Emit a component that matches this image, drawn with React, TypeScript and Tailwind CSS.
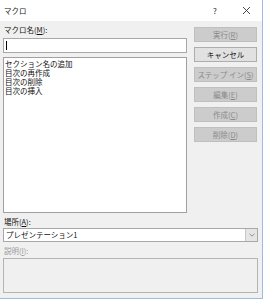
import React from "react";

const font = { fontFamily: '"Noto Sans CJK JP", "Noto Sans", sans-serif' };

function U({ children }: { children: React.ReactNode }) {
  return <span className="underline underline-offset-1">{children}</span>;
}

function Btn({ children, enabled = false }: { children: React.ReactNode; enabled?: boolean }) {
  return (
    <div
      className={
        "h-[15px] w-[63px] flex items-center justify-center text-[7.5px] leading-none border " +
        (enabled
          ? "bg-[#e1e1e1] border-[#adadad] text-[#111]"
          : "bg-[#cccccc] border-[#bfbfbf] text-[#8a8a8a]")
      }
    >
      {children}
    </div>
  );
}

export default function App() {
  return (
    <div className="w-[265px] h-[300px] bg-white" style={font}>
      <div className="w-[263px] h-[299px] border-r border-b border-[#9cbde0] flex flex-col">
        <div className="h-[21px] bg-white flex items-center pl-[4px] text-[7.5px] text-[#222]">
          <span className="flex-1">マクロ</span>
          <span className="w-[10px] text-center text-[8px] mr-[22px]">?</span>
          <svg width="9" height="9" viewBox="0 0 9 9" className="mr-[11px]">
            <path d="M1 1L8 8M8 1L1 8" stroke="#333" strokeWidth="0.9" />
          </svg>
        </div>
        <div className="flex-1 bg-[#f0f0f0] flex flex-col pl-[3px] pr-[4px]">
          <div className="flex gap-[7px]">
            <div className="w-[184px] flex flex-col">
              <div className="h-[17px] flex items-center pl-[1px] pt-[1px] text-[7.5px] text-[#111]">
                マクロ名(<U>M</U>):
              </div>
              <div className="h-[15px] bg-white border border-[#a8a8a8] flex items-center pl-[2px]">
                <div className="w-[1px] h-[9px] bg-black" />
              </div>
              <div className="mt-[4px] h-[156px] bg-white border border-[#a0a0a0] pt-[1px] pl-[1px] text-[7.5px] leading-[9px] text-[#111]">
                <div>セクション名の追加</div>
                <div>目次の再作成</div>
                <div>目次の削除</div>
                <div>目次の挿入</div>
              </div>
            </div>
            <div className="flex flex-col gap-[5px] pt-[6px]">
              <Btn>実行(<U>R</U>)</Btn>
              <Btn enabled>キャンセル</Btn>
              <Btn>ステップ イン(<U>S</U>)</Btn>
              <Btn>編集(<U>E</U>)</Btn>
              <Btn>作成(<U>C</U>)</Btn>
              <Btn>削除(<U>D</U>)</Btn>
            </div>
          </div>
          <div className="h-[15px] mt-[0px] flex items-center pl-[1px] pt-[2px] text-[7.5px] text-[#111]">
            場所(<U>A</U>):
          </div>
          <div className="h-[14px] bg-white border border-[#a8a8a8] flex items-center text-[7.5px] text-[#111]">
            <span className="flex-1 pl-[2px]">プレゼンテーション1</span>
            <div className="w-[12px] h-full bg-[#e5e5e5] border-l border-[#c8c8c8] flex items-center justify-center">
              <svg width="6" height="4" viewBox="0 0 6 4">
                <path d="M0.5 0.8L3 3.2L5.5 0.8" stroke="#777" strokeWidth="0.8" fill="none" />
              </svg>
            </div>
          </div>
          <div className="h-[16px] flex items-center pl-[1px] pt-[1px] text-[7.5px] text-[#9a9a9a]">
            説明(<U>I</U>):
          </div>
          <div className="h-[35px] border border-[#b4b4b4] bg-[#f0f0f0]" />
        </div>
      </div>
    </div>
  );
}
